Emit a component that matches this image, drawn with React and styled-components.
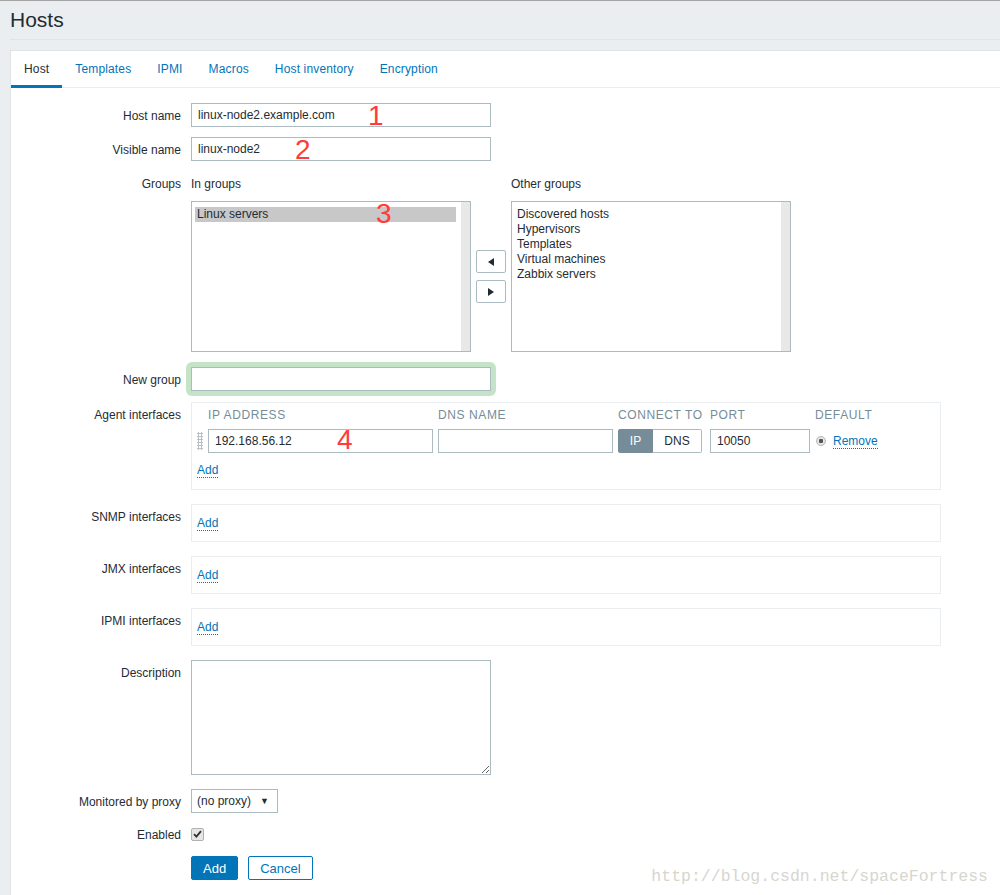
import React from 'react';
import styled, { createGlobalStyle } from 'styled-components';

const GlobalStyle = createGlobalStyle`
  html, body {
    margin: 0;
    padding: 0;
    background: #ebeef0;
  }
  body {
    font-family: "Liberation Sans", Arial, sans-serif;
    font-size: 12px;
    color: #1f2c33;
  }
`;

const Page = styled.div`
  position: relative;
  width: 1000px;
  height: 895px;
  overflow: hidden;
  border-top: 1px solid #a3a3a3;
  box-sizing: border-box;
  background: #ebeef0;
`;

const Header = styled.header`
  height: 38px;
  margin: 0 0 10px 10px;
  border-bottom: 1px solid #dfe4e7;
  display: flex;
  align-items: center;
`;

const Title = styled.h1`
  margin: 0;
  font-size: 21px;
  font-weight: normal;
  color: #1f2c33;
  line-height: 24px;
`;

const Panel = styled.div`
  margin-left: 10px;
  background: #ffffff;
  border-top: 1px solid #dfe4e7;
  border-left: 1px solid #dfe4e7;
  min-height: 900px;
`;

const TabList = styled.ul`
  display: flex;
  list-style: none;
  margin: 0;
  padding: 0;
  height: 36px;
  border-bottom: 1px solid #ebeef0;
`;

const Tab = styled.li`
  height: 34px;
  padding: 0 13px;
  line-height: 36px;
  letter-spacing: 0.15px;
  white-space: nowrap;
  color: ${p => (p.$active ? '#1f2c33' : '#0275b8')};
  border-bottom: 3px solid ${p => (p.$active ? '#0275b8' : 'transparent')};
  cursor: pointer;
`;

const Form = styled.div`
  padding: 15px 10px 0 10px;
`;

const Row = styled.div`
  display: grid;
  grid-template-columns: 160px 1fr;
  column-gap: 10px;
  align-items: start;
  margin-top: ${p => p.$gap ?? 10}px;
  &:first-child {
    margin-top: 0;
  }
`;

const Label = styled.label`
  text-align: right;
  height: 24px;
  line-height: 26px;
  white-space: nowrap;
`;

const Field = styled.div`
  position: relative;
  width: ${p => p.$width || 300}px;
`;

const TextInput = styled.input`
  box-sizing: border-box;
  display: block;
  width: ${p => p.$width || 300}px;
  height: 24px;
  padding: 0 6px;
  border: 1px solid #acbbc2;
  background: #ffffff;
  font-family: "Liberation Sans", Arial, sans-serif;
  font-size: 12px;
  color: #1f2c33;
  outline: none;
  border-radius: 0;
`;

const Highlight = styled.div`
  width: 300px;
  border-radius: 2px;
  box-shadow: 0 0 0 5px #c5e3c6;
`;

const Mark = styled.span`
  position: absolute;
  left: ${p => p.$x}px;
  top: ${p => p.$y}px;
  font-family: "Liberation Sans", Arial, sans-serif;
  font-size: 28px;
  line-height: 28px;
  color: #ff3b3b;
  pointer-events: none;
`;

const Groups = styled.div`
  display: grid;
  grid-template-columns: 280px 40px 280px;
`;

const GroupHead = styled.div`
  height: 24px;
  line-height: 26px;
  margin-bottom: 6px;
`;

const ListBox = styled.div`
  position: relative;
  box-sizing: border-box;
  height: 151px;
  border: 1px solid #acbbc2;
  padding: 5px 14px 0 3px;
  display: flex;
  flex-direction: column;
  &::after {
    content: '';
    position: absolute;
    top: 0;
    right: 0;
    bottom: 0;
    width: 9px;
    background: #e8e8e8;
  }
`;

const ListItem = styled.div`
  line-height: 15px;
  padding-left: 2px;
  color: #1f2c33;
  background: ${p => (p.$selected ? '#c8c8c8' : 'transparent')};
`;

const Mover = styled.div`
  display: flex;
  flex-direction: column;
  align-items: center;
  justify-content: center;
  gap: 7px;
  padding-top: 30px;
`;

const MoveBtn = styled.button`
  width: 30px;
  height: 23px;
  padding: 0;
  border: 1px solid #acbbc2;
  border-radius: 2px;
  background: #ffffff;
  display: flex;
  align-items: center;
  justify-content: center;
`;

const IfaceBox = styled.div`
  box-sizing: border-box;
  width: 750px;
  border: 1px solid #ebeef0;
  padding: ${p => (p.$agent ? '4px 5px 7px' : '6px 5px')};
`;

const IfaceGrid = styled.div`
  display: grid;
  grid-template-columns: 6px 225px 175px 87px 100px 1fr;
  column-gap: 5px;
  row-gap: 6px;
  align-items: center;
  margin-bottom: 5px;
`;

const ColHead = styled.div`
  line-height: 16px;
  color: #768d99;
  letter-spacing: 0.6px;
  white-space: nowrap;
`;

const DragHandle = styled.div`
  width: 6px;
  height: 18px;
  background-image: radial-gradient(circle, #b7c0c6 1px, transparent 1.2px);
  background-size: 3px 3px;
`;

const Toggle = styled.div`
  display: flex;
  width: 84px;
  height: 24px;
  box-sizing: border-box;
`;

const ToggleOpt = styled.div`
  box-sizing: border-box;
  width: ${p => p.$w}px;
  display: flex;
  align-items: center;
  justify-content: center;
  background: ${p => (p.$on ? '#768d99' : '#ffffff')};
  color: ${p => (p.$on ? '#ffffff' : '#1f2c33')};
  border: 1px solid ${p => (p.$on ? '#768d99' : '#acbbc2')};
  border-left-width: ${p => (p.$on ? 1 : 0)}px;
  border-radius: ${p => (p.$on ? '2px 0 0 2px' : '0 2px 2px 0')};
`;

const DefaultCell = styled.div`
  display: flex;
  align-items: center;
  gap: 7px;
  padding-left: 1px;
`;

const Radio = styled.span`
  width: 10px;
  height: 10px;
  border-radius: 50%;
  box-sizing: border-box;
  border: 1px solid #b4b4b4;
  background: radial-gradient(circle, #555 0 2px, #e6e6e6 2.5px);
`;

const DotLink = styled.a`
  color: #0275b8;
  text-decoration: none;
  border-bottom: 1px dotted #0275b8;
  line-height: 14px;
  cursor: pointer;
`;

const AddLine = styled.div`
  line-height: 24px;
  height: 24px;
`;

const TextArea = styled.textarea`
  box-sizing: border-box;
  display: block;
  width: 300px;
  height: 115px;
  border: 1px solid #acbbc2;
  border-radius: 0;
  resize: both;
  font-family: "Liberation Sans", Arial, sans-serif;
  font-size: 12px;
  outline: none;
`;

const Select = styled.div`
  box-sizing: border-box;
  width: 87px;
  height: 24px;
  border: 1px solid #acbbc2;
  padding: 0 8px 0 5px;
  display: flex;
  align-items: center;
  justify-content: space-between;
  font-size: 12px;
`;

const Caret = styled.span`
  font-size: 9px;
  color: #1f2c33;
`;

const CheckWrap = styled.div`
  height: 24px;
  display: flex;
  align-items: center;
`;

const CheckBox = styled.span`
  box-sizing: border-box;
  width: 13px;
  height: 13px;
  border: 1px solid #b0b0b0;
  border-radius: 2px;
  background: #e6e6e6;
  display: flex;
  align-items: center;
  justify-content: center;
`;

const Actions = styled.div`
  display: flex;
  gap: 10px;
`;

const Button = styled.button`
  box-sizing: border-box;
  height: 24px;
  padding: 0 11px;
  min-width: ${p => (p.$primary ? 47 : 64)}px;
  border: 1px solid #0275b8;
  border-radius: 2px;
  background: ${p => (p.$primary ? '#0275b8' : '#ffffff')};
  color: ${p => (p.$primary ? '#ffffff' : '#0275b8')};
  font-family: "Liberation Sans", Arial, sans-serif;
  font-size: 13px;
  cursor: pointer;
`;

const Watermark = styled.div`
  position: absolute;
  right: 12px;
  bottom: 9px;
  font-family: "Liberation Mono", "DejaVu Sans Mono", monospace;
  font-size: 16.5px;
  color: #d6d6cf;
  pointer-events: none;
`;

const tabs = ['Host', 'Templates', 'IPMI', 'Macros', 'Host inventory', 'Encryption'];
const otherGroups = ['Discovered hosts', 'Hypervisors', 'Templates', 'Virtual machines', 'Zabbix servers'];

function Arrow({ dir }) {
  return (
    <svg width="6" height="8" viewBox="0 0 6 8">
      {dir === 'left' ? <polygon points="6,0 6,8 0,4" fill="#1f2c33" /> : <polygon points="0,0 0,8 6,4" fill="#1f2c33" />}
    </svg>
  );
}

function EmptyInterface({ label }) {
  return (
    <Row $gap={14}>
      <Label>{label}</Label>
      <IfaceBox>
        <AddLine>
          <DotLink>Add</DotLink>
        </AddLine>
      </IfaceBox>
    </Row>
  );
}

export default function App() {
  return (
    <Page>
      <GlobalStyle />
      <Header>
        <Title>Hosts</Title>
      </Header>
      <Panel>
        <TabList>
          {tabs.map((t, i) => (
            <Tab key={t} $active={i === 0}>{t}</Tab>
          ))}
        </TabList>
        <Form>
          <Row>
            <Label>Host name</Label>
            <Field>
              <TextInput defaultValue="linux-node2.example.com" />
              <Mark $x={177} $y={-1}>1</Mark>
            </Field>
          </Row>
          <Row>
            <Label>Visible name</Label>
            <Field>
              <TextInput defaultValue="linux-node2" />
              <Mark $x={104} $y={-1}>2</Mark>
            </Field>
          </Row>
          <Row>
            <Label>Groups</Label>
            <Groups>
              <div>
                <GroupHead>In groups</GroupHead>
                <ListBox>
                  <ListItem $selected>Linux servers</ListItem>
                  <Mark $x={184} $y={-2}>3</Mark>
                </ListBox>
              </div>
              <Mover>
                <MoveBtn><Arrow dir="left" /></MoveBtn>
                <MoveBtn><Arrow dir="right" /></MoveBtn>
              </Mover>
              <div>
                <GroupHead>Other groups</GroupHead>
                <ListBox>
                  {otherGroups.map(g => (
                    <ListItem key={g}>{g}</ListItem>
                  ))}
                </ListBox>
              </div>
            </Groups>
          </Row>
          <Row $gap={15}>
            <Label>New group</Label>
            <Highlight>
              <TextInput />
            </Highlight>
          </Row>
          <Row $gap={11}>
            <Label>Agent interfaces</Label>
            <IfaceBox $agent>
              <IfaceGrid>
                <span />
                <ColHead>IP ADDRESS</ColHead>
                <ColHead>DNS NAME</ColHead>
                <ColHead>CONNECT TO</ColHead>
                <ColHead>PORT</ColHead>
                <ColHead>DEFAULT</ColHead>
                <DragHandle />
                <Field $width={225}>
                  <TextInput $width={225} defaultValue="192.168.56.12" />
                  <Mark $x={129} $y={-3}>4</Mark>
                </Field>
                <TextInput $width={175} />
                <Toggle>
                  <ToggleOpt $on $w={35}>IP</ToggleOpt>
                  <ToggleOpt $w={49}>DNS</ToggleOpt>
                </Toggle>
                <TextInput $width={100} defaultValue="10050" />
                <DefaultCell>
                  <Radio />
                  <DotLink>Remove</DotLink>
                </DefaultCell>
              </IfaceGrid>
              <AddLine>
                <DotLink>Add</DotLink>
              </AddLine>
            </IfaceBox>
          </Row>
          <EmptyInterface label="SNMP interfaces" />
          <EmptyInterface label="JMX interfaces" />
          <EmptyInterface label="IPMI interfaces" />
          <Row $gap={14}>
            <Label>Description</Label>
            <TextArea />
          </Row>
          <Row $gap={14}>
            <Label>Monitored by proxy</Label>
            <Select>
              <span>(no proxy)</span>
              <Caret>▼</Caret>
            </Select>
          </Row>
          <Row $gap={9}>
            <Label>Enabled</Label>
            <CheckWrap>
              <CheckBox>
                <svg width="9" height="8" viewBox="0 0 9 8">
                  <path d="M1 4.2 L3.4 6.6 L8 1.2" stroke="#333" strokeWidth="1.8" fill="none" />
                </svg>
              </CheckBox>
            </CheckWrap>
          </Row>
          <Row $gap={10}>
            <span />
            <Actions>
              <Button $primary>Add</Button>
              <Button>Cancel</Button>
            </Actions>
          </Row>
        </Form>
      </Panel>
      <Watermark>http://blog.csdn.net/spaceFortress</Watermark>
    </Page>
  );
}
